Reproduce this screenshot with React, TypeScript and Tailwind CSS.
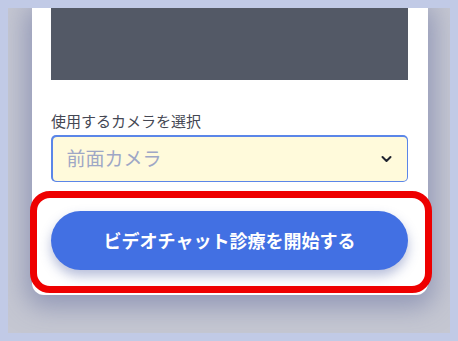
import React from "react";

export default function App() {
  const jp = { fontFamily: '"Noto Sans CJK JP", "Noto Sans", sans-serif' };
  return (
    <div className="w-[458px] h-[341px] bg-[#c1cae6] p-2" style={jp}>
      <div className="relative h-full w-full overflow-hidden bg-[#c5c7d2]">
        <div className="ml-[24px] w-[396px] bg-white rounded-b-[12px] pl-[19px] pr-[20px] pb-[25px] shadow-[0_6px_26px_6px_rgba(95,105,155,0.5)]">
          <div className="h-[72px] bg-[#535966]" />
          <div className="mt-[31px] text-[15px] leading-[20px] text-[#444753]">使用するカメラを選択</div>
          <div className="mt-[4px] h-[47px] rounded-[5px] bg-[#5b86e8] p-[1.5px]">
            <div className="h-full rounded-[4px] bg-[#fffadb] flex items-center justify-between pl-[14px] pr-[15px]">
              <span className="text-[19px] text-[#9ea7c6]">前面カメラ</span>
              <svg width="11" height="8" viewBox="0 0 11 8" fill="none">
                <polyline points="1.5,2 5.5,6 9.5,2" stroke="#1f2330" strokeWidth="2" strokeLinecap="round" strokeLinejoin="round" />
              </svg>
            </div>
          </div>
          <button className="mt-[29px] w-full h-[59px] rounded-full bg-[#4270e3] text-white text-[18px] font-bold shadow-[0_6px_12px_rgba(50,70,150,0.35)]">
            ビデオチャット診療を開始する
          </button>
        </div>
        <div className="absolute left-[22px] top-[183px] w-[402px] h-[102px] rounded-[20px] border-[7px] border-solid border-[#ee0000]" />
      </div>
    </div>
  );
}
